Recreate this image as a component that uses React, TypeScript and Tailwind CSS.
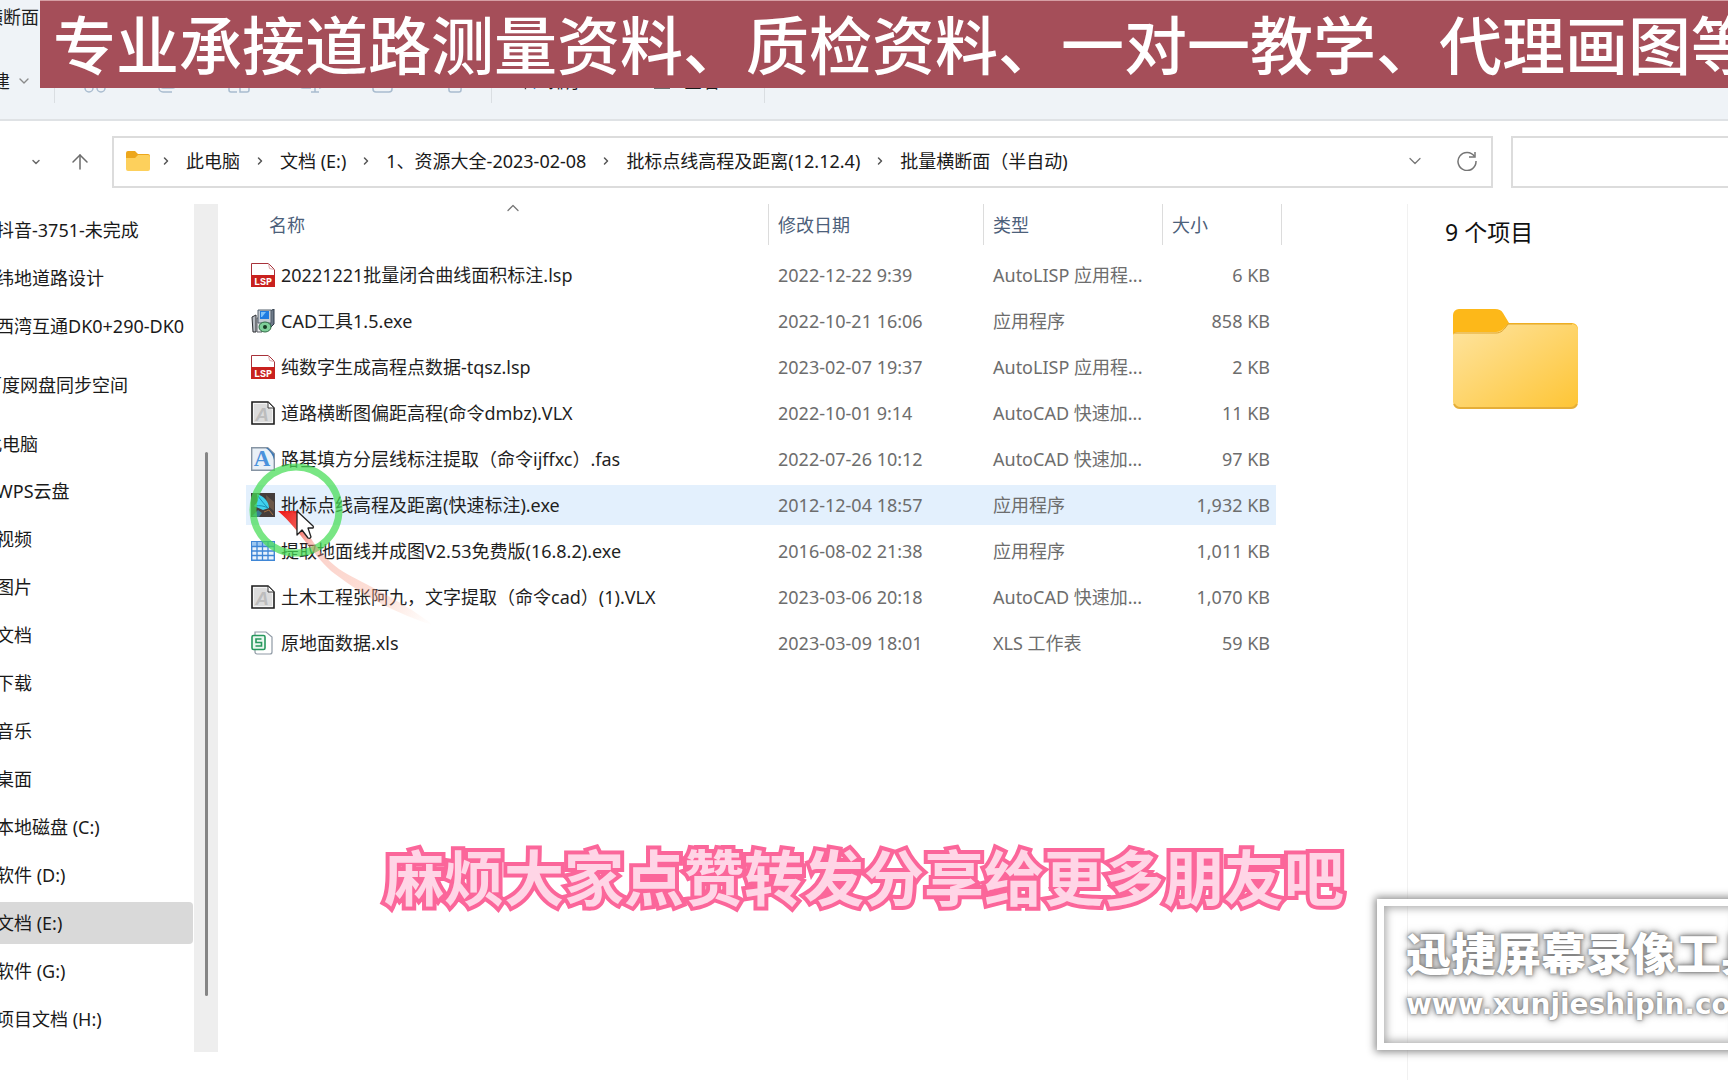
import React from 'react';
import { ArrowUp, ChevronDown, ChevronRight, ChevronUp } from 'lucide-react';

type IconKind = 'lsp' | 'setup' | 'vlx' | 'fas' | 'feather' | 'grid' | 'xls';

interface FileItem {
  name: string;
  date: string;
  type: string;
  size: string;
  icon: IconKind;
  selected?: boolean;
}

interface PlaceItem {
  label: string;
  active?: boolean;
}

const files: FileItem[] = [
  { name: '20221221批量闭合曲线面积标注.lsp', date: '2022-12-22 9:39', type: 'AutoLISP 应用程...', size: '6 KB', icon: 'lsp' },
  { name: 'CAD工具1.5.exe', date: '2022-10-21 16:06', type: '应用程序', size: '858 KB', icon: 'setup' },
  { name: '纯数字生成高程点数据-tqsz.lsp', date: '2023-02-07 19:37', type: 'AutoLISP 应用程...', size: '2 KB', icon: 'lsp' },
  { name: '道路横断图偏距高程(命令dmbz).VLX', date: '2022-10-01 9:14', type: 'AutoCAD 快速加...', size: '11 KB', icon: 'vlx' },
  { name: '路基填方分层线标注提取（命令ijffxc）.fas', date: '2022-07-26 10:12', type: 'AutoCAD 快速加...', size: '97 KB', icon: 'fas' },
  { name: '批标点线高程及距离(快速标注).exe', date: '2012-12-04 18:57', type: '应用程序', size: '1,932 KB', icon: 'feather', selected: true },
  { name: '提取地面线并成图V2.53免费版(16.8.2).exe', date: '2016-08-02 21:38', type: '应用程序', size: '1,011 KB', icon: 'grid' },
  { name: '土木工程张阿九，文字提取（命令cad）(1).VLX', date: '2023-03-06 20:18', type: 'AutoCAD 快速加...', size: '1,070 KB', icon: 'vlx' },
  { name: '原地面数据.xls', date: '2023-03-09 18:01', type: 'XLS 工作表', size: '59 KB', icon: 'xls' },
];

const quickAccess: PlaceItem[] = [
  { label: '抖音-3751-未完成' },
  { label: '纬地道路设计' },
  { label: '西湾互通DK0+290-DK0' },
];

const thisPc: PlaceItem[] = [
  { label: 'WPS云盘' },
  { label: '视频' },
  { label: '图片' },
  { label: '文档' },
  { label: '下载' },
  { label: '音乐' },
  { label: '桌面' },
  { label: '本地磁盘 (C:)' },
  { label: '软件 (D:)' },
  { label: '文档 (E:)', active: true },
  { label: '软件 (G:)' },
  { label: '项目文档 (H:)' },
];

const crumbs = ['此电脑', '文档 (E:)', '1、资源大全-2023-02-08', '批标点线高程及距离(12.12.4)', '批量横断面（半自动)'];

const FileIcon: React.FC<{ kind: IconKind }> = ({ kind }) => {
  switch (kind) {
    case 'lsp':
      return (
        <svg viewBox="0 0 24 24" className="w-6 h-6 shrink-0">
          <path d="M.5 .5h17l6 6v17H.5z" fill="#fff" stroke="#a8323a" />
          <path d="M17.5 .5l1 5 5 1" fill="none" stroke="#d9a5a8" />
          <path d="M0 12h24v12H0z" fill="#c9211e" />
          <text x="12" y="22" textAnchor="middle" fontSize="10" fontWeight="700" fontFamily="Liberation Mono, monospace" fill="#fff">LSP</text>
        </svg>
      );
    case 'setup':
      return (
        <svg viewBox="0 0 24 24" className="w-6 h-6 shrink-0">
          <path d="M1 8l4-2v17H2z" fill="#b9bec4" stroke="#2c2f33" />
          <path d="M6 9h5v14H6z" fill="#e8eaec" stroke="#5a5f66" />
          <path d="M19 2l4-2v15l-4 4z" fill="#6e7b8a" stroke="#2c3846" />
          <path d="M7 1h13v13H7z" fill="#c5ccd4" stroke="#55606d" />
          <path d="M9 2h9v8H9z" fill="#1f7be0" />
          <path d="M10 3h5l-4 5h-1z" fill="#7cc0f8" />
          <ellipse cx="14" cy="18" rx="6" ry="5" fill="#7fcf9a" stroke="#2f6b45" />
          <circle cx="14" cy="18" r="2" fill="#173a23" />
        </svg>
      );
    case 'vlx':
      return (
        <svg viewBox="0 0 24 24" className="w-6 h-6 shrink-0">
          <path d="M1 1h16l6 6v16H1z" fill="#f4f4f4" stroke="#1b1b1b" strokeWidth="1.6" />
          <path d="M3 3h12l6 6v12H3z" fill="#dcdcdc" />
          <path d="M17 1v6h6z" fill="#fff" stroke="#3a3a3a" />
          <text x="11" y="20" textAnchor="middle" fontSize="19" fontWeight="700" fontStyle="italic" fontFamily="Liberation Sans, sans-serif" fill="#bdbdbd">A</text>
        </svg>
      );
    case 'fas':
      return (
        <svg viewBox="0 0 24 24" className="w-6 h-6 shrink-0">
          <path d="M.7 .7h16l6.600 6v16.600H.7z" fill="#e9f0f7" stroke="#8694a3" strokeWidth="1.400" />
          <path d="M15 1h2l6 6v6c-1-5-4-9-8-12z" fill="#3d78b5" />
          <text x="11" y="19" textAnchor="middle" fontSize="23" fontWeight="700" fontFamily="Liberation Serif, serif" fill="#4a92dc">A</text>
        </svg>
      );
    case 'feather':
      return (
        <svg viewBox="0 0 24 24" className="w-6 h-6 shrink-0">
          <path d="M0 0h24v24H0z" fill="#453d3b" />
          <path d="M15 2l8 7v9l-7-6z" fill="#6a5748" />
          <path d="M6 1c7 2 12 8 12 14l-6 2-9-4c4-3 4-7 3-12z" fill="#3fd2ee" />
          <path d="M7 3c3 4 6 8 10 12M4 13c5-1 9 0 13 2" stroke="#1a8fb5" fill="none" />
          <path d="M1 23l6-6 4 3-3 4z" fill="#3a7d92" />
          <path d="M13 19l5-2 4 5" stroke="#a4703f" fill="none" />
        </svg>
      );
    case 'grid':
      return (
        <svg viewBox="0 0 24 24" className="w-6 h-6 shrink-0">
          <path d="M.7 2.700h22.600v18.600H.7z" fill="#e8f2fc" stroke="#3f86d6" strokeWidth="1.400" />
          <path d="M1 3h22v4H1z" fill="#9cc7f0" />
          <path d="M1 7.500h22M1 12h22M1 16.500h22M6 3v18M11.500 3v18M17 3v18" stroke="#3f86d6" strokeWidth="1.300" />
        </svg>
      );
    case 'xls':
      return (
        <svg viewBox="0 0 24 24" className="w-6 h-6 shrink-0">
          <path d="M4 1h11l6 5v15a2 2 0 0 1-2 2H6a2 2 0 0 1-2-2z" fill="#fff" stroke="#8f9aa5" strokeWidth="1.200" />
          <rect x="1" y="4.500" width="13" height="14" rx="1.500" fill="#eaf8f0" stroke="#27985e" strokeWidth="1.600" />
          <path d="M10.500 8H5v3.500h5.500V15H4.500" fill="none" stroke="#27985e" strokeWidth="1.600" />
        </svg>
      );
  }
};

const SmallFolder = () => (
  <svg viewBox="0 0 24 20" className="w-6 h-5 shrink-0">
    <path d="M0 2a2 2 0 0 1 2-2h7l3 3h10a2 2 0 0 1 2 2v6H0z" fill="#eda71c" />
    <path d="M0 7h9l3-3h10a2 2 0 0 1 2 2v12a2 2 0 0 1-2 2H2a2 2 0 0 1-2-2z" fill="#fdd05c" />
  </svg>
);

const BigFolder = () => (
  <svg viewBox="0 0 125 100" className="w-[125px] h-[100px]">
    <defs>
      <linearGradient id="folder-front" x1="0" y1="0" x2="1" y2="1">
        <stop offset="0" stopColor="#fee4a0" />
        <stop offset="1" stopColor="#fec535" />
      </linearGradient>
    </defs>
    <path d="M0 6a6 6 0 0 1 6-6h36c4 0 6 1 8 4l6 10h63a6 6 0 0 1 6 6v20H0z" fill="#fdb819" />
    <path d="M0 26q1-3 5-3h38c4 0 8-3 12-8h64a6 6 0 0 1 6 6v72a6 6 0 0 1-6 6H6a6 6 0 0 1-6-6z" fill="url(#folder-front)" />
    <path d="M1 24h42c5 0 8-3 12-9h64" fill="none" stroke="#dfa52c" strokeWidth="1" />
    <path d="M1 95q2 4 6 4h111q4 0 6-4" fill="none" stroke="#e5ae38" strokeWidth="2" />
  </svg>
);

const RefreshIcon = () => (
  <svg viewBox="0 0 20 20" className="w-5 h-5" fill="none" stroke="#757575" strokeWidth="1.500">
    <path d="M17.500 5.500A9 9 0 1 0 19 10" />
    <path d="M18 1v5h-6" />
  </svg>
);

const toolIcons: { label: string; path: string }[] = [
  { label: '剪切', path: 'M5 1l11 16M19 1L8 17M2 19a4 4 0 1 0 8 0a4 4 0 1 0-8 0M14 19a4 4 0 1 0 8 0a4 4 0 1 0-8 0' },
  { label: '复制', path: 'M8 1h10a2 2 0 0 1 2 2v14a2 2 0 0 1-2 2H8a2 2 0 0 1-2-2V3a2 2 0 0 1 2-2zM4 5v14a4 4 0 0 0 4 4h9' },
  { label: '粘贴', path: 'M10 23H4a2 2 0 0 1-2-2V4a2 2 0 0 1 2-2h14v6M13 9h7a2 2 0 0 1 2 2v10a2 2 0 0 1-2 2h-7z' },
  { label: '重命名', path: 'M12 19H4a3 3 0 0 1-3-3V8a3 3 0 0 1 3-3h8M20 5a3 3 0 0 1 3 3v8a3 3 0 0 1-3 3M16 1v22M12 23h8' },
  { label: '共享', path: 'M10 4H5a3 3 0 0 0-3 3v13a3 3 0 0 0 3 3h13a3 3 0 0 0 3-3v-4M8 15c1-6 5-8 9-8V2l6 7-6 6v-4' },
  { label: '删除', path: 'M3 5h18M9 5V2h6v3M5 5l1 16a2 2 0 0 0 2 2h8a2 2 0 0 0 2-2l1-16' },
];

const TopBar = () => (
  <header className="bg-[#eff3f7] border-b-2 border-[#dfe2e5] pb-[3px]">
    <div className="flex justify-end w-[39px] h-[34px] overflow-hidden items-center whitespace-nowrap text-[#1f1f1f]">批量横断面</div>
    <div className="flex items-center h-[70px] mt-3">
      <button className="flex items-center gap-[6px] text-[#1a1a1a]">
        <span className="flex justify-end w-[10px] overflow-hidden whitespace-nowrap">新建</span>
        <ChevronDown className="w-4 h-4 text-[#8a8a8a]" />
      </button>
      <div className="w-px h-11 ml-[22px] mr-7 bg-[#dadee2]" />
      <div className="flex items-center gap-12">
        {toolIcons.map((tool) => (
          <button key={tool.label} aria-label={tool.label}>
            <svg viewBox="0 0 24 24" className="block w-6 h-6" fill="none" stroke="#a9bccf" strokeWidth="1.500">
              <path d={tool.path} />
            </svg>
          </button>
        ))}
      </div>
      <div className="w-px h-11 ml-6 mr-7 bg-[#dadee2]" />
      <button className="flex items-center gap-2 text-[#1a1a1a]">
        <svg viewBox="0 0 22 22" className="w-5 h-5" fill="none" strokeWidth="1.500">
          <path d="M6 20V3M2 7l4-4 4 4" stroke="#444" />
          <path d="M16 2v17M12 15l4 4 4-4" stroke="#2f7fc9" />
        </svg>
        排序
      </button>
      <button className="flex items-center gap-3 ml-[68px] text-[#1a1a1a]">
        <svg viewBox="0 0 20 20" className="w-5 h-5" stroke="#444" strokeWidth="1.500">
          <path d="M2 4h16M2 10h16M2 17h16" />
        </svg>
        查看
      </button>
      <div className="w-px h-11 ml-11 bg-[#dadee2]" />
    </div>
  </header>
);

const AddressBar = () => (
  <div className="flex items-center pt-[15px] pb-4">
    <div className="flex items-center gap-[30px] w-[112px] pl-[30px] text-[#6b6b6b]">
      <button aria-label="最近浏览的位置"><ChevronDown className="block w-3 h-3" strokeWidth={3} /></button>
      <button aria-label="上移"><ArrowUp className="block w-6 h-6 -ml-1" strokeWidth={1.500} /></button>
    </div>
    <div className="flex items-center flex-1 h-[52px] pl-3 pr-[14px] pb-[2px] border-2 border-[#dcdcdc]">
      <SmallFolder />
      <nav className="flex items-center flex-1 -ml-1 whitespace-nowrap text-[#1a1a1a]">
        {crumbs.map((crumb) => (
          <React.Fragment key={crumb}>
            <ChevronRight className="w-3 h-3 mx-[14px] text-[#555]" strokeWidth={3} />
            <a href="#">{crumb}</a>
          </React.Fragment>
        ))}
      </nav>
      <button aria-label="以前的位置" className="mr-8 text-[#777]"><ChevronDown className="block w-5 h-5" strokeWidth={1.500} /></button>
      <button aria-label="刷新"><RefreshIcon /></button>
    </div>
    <input type="search" aria-label="搜索" className="w-[217px] h-[52px] ml-[18px] px-3 border-2 border-r-0 border-[#dcdcdc] focus:outline-none" />
  </div>
);

const PlaceLink: React.FC<{ item: PlaceItem }> = ({ item }) => (
  <li className="flex items-center h-12">
    <a href="#" className={`flex items-center w-full h-[42px] pl-3 rounded-r-sm ${item.active ? 'bg-[#d9d9d9]' : ''}`}>{item.label}</a>
  </li>
);

const Sidebar = () => (
  <aside className="flex w-[218px] mb-7 overflow-hidden shrink-0">
    <nav className="w-[209px] -ml-4 pt-[2px] whitespace-nowrap shrink-0 text-[#1a1a1a]">
      <ul>
        {quickAccess.map((item) => <PlaceLink key={item.label} item={item} />)}
      </ul>
      <a href="#" className="flex items-center h-12 mt-[11px]">百度网盘同步空间</a>
      <a href="#" className="flex items-center h-12 mt-[11px]">此电脑</a>
      <ul className="-mt-px">
        {thisPc.map((item) => <PlaceLink key={item.label} item={item} />)}
      </ul>
    </nav>
    <div className="flex flex-1 justify-center ml-px bg-[#eee]">
      <div className="w-[3px] mt-[248px] mb-14 rounded-full bg-[#858585]" />
    </div>
  </aside>
);

const HeadCell: React.FC<{ label: string }> = ({ label }) => (
  <th className="p-0 font-normal align-top">
    <button className="flex items-center w-full h-[41px] pl-[9px] border-l border-[#dcdcdc]">{label}</button>
  </th>
);

const FileTable = () => (
  <main className="flex-1 min-w-0 pl-7 pr-[125px]">
    <table className="w-full -mt-[6px] table-fixed border-separate border-spacing-x-0 border-spacing-y-[6px] text-left whitespace-nowrap">
      <colgroup>
        <col />
        <col className="w-[215px]" />
        <col className="w-[179px]" />
        <col className="w-[114px]" />
        <col className="w-[6px]" />
      </colgroup>
      <thead className="text-[#4c607a]">
        <tr className="h-[45px]">
          <th className="relative p-0 font-normal align-top">
            <button className="flex items-center w-full h-[41px] pl-[23px]">名称</button>
            <ChevronUp className="absolute top-[-6px] left-1/2 w-5 h-5 -ml-1 text-[#777]" strokeWidth={1.500} />
          </th>
          <HeadCell label="修改日期" />
          <HeadCell label="类型" />
          <HeadCell label="大小" />
          <th className="p-0 align-top"><div className="h-[41px] border-r border-[#dcdcdc]" /></th>
        </tr>
      </thead>
      <tbody className="text-[#6d6d6d]">
        {files.map((file) => (
          <tr key={file.name} className="h-10">
            <td className={`p-0 ${file.selected ? 'bg-[#e3f0fd]' : ''}`}>
              <div className="flex items-center gap-[6px] pl-[5px] text-[#1f1f1f]">
                <FileIcon kind={file.icon} />
                {file.name}
              </div>
            </td>
            <td className={`p-0 pl-[10px] ${file.selected ? 'bg-[#e3f0fd]' : ''}`}>{file.date}</td>
            <td className={`p-0 pl-[10px] ${file.selected ? 'bg-[#e3f0fd]' : ''}`}>{file.type}</td>
            <td className={`p-0 pr-[6px] text-right ${file.selected ? 'bg-[#e3f0fd]' : ''}`}>{file.size}</td>
          </tr>
        ))}
      </tbody>
    </table>
  </main>
);

const DetailsPane = () => (
  <section className="w-[321px] pt-3 pl-[37px] border-l border-[#f1f1f1] shrink-0">
    <h2 className="text-[23px] leading-8 text-[#111]">9 个项目</h2>
    <div className="mt-[61px] ml-2"><BigFolder /></div>
  </section>
);

// Click ring, pointer and the fading stroke behind it
const Pointer = () => (
  <svg viewBox="0 0 200 176" className="absolute left-[240px] top-[460px] w-[200px] h-[176px] pointer-events-none">
    <defs>
      <linearGradient id="trail" gradientUnits="userSpaceOnUse" x1="40" y1="51" x2="192" y2="166">
        <stop offset="0" stopColor="#f01818" />
        <stop offset="0.12" stopColor="#f23a30" stopOpacity="0.850" />
        <stop offset="0.250" stopColor="#f58a78" stopOpacity="0.400" />
        <stop offset="0.700" stopColor="#f9a890" stopOpacity="0.350" />
        <stop offset="1" stopColor="#fbc0a8" stopOpacity="0" />
      </linearGradient>
    </defs>
    <circle cx="56" cy="50" r="43" fill="none" stroke="#45dc55" strokeOpacity="0.720" strokeWidth="7" />
    <path d="M38 51h19c8 18 18 40 42 58 20 13 54 26 96 57-38-12-70-29-100-52C74 98 62 72 38 51z" fill="url(#trail)" />
    <path d="M57 51v24l5-5 6 8q2 1 3-1l-3-9h5q1-1 0-2z" fill="#fff" stroke="#222" strokeWidth="1.300" strokeLinejoin="round" />
  </svg>
);

const Watermark = () => (
  <div className="absolute top-[899px] left-[1377px] -right-4 h-[151px] pt-[22px] pl-[22px] border-[7px] border-white overflow-hidden whitespace-nowrap text-white shadow-[0_0_8px_2px_#8a8a8a,inset_0_0_8px_2px_#a8a8a8]">
    <p className="text-[45px] leading-[52px] font-black [text-shadow:0_0_2px_#777,0_0_4px_#888,0_0_9px_#777]">迅捷屏幕录像工具</p>
    <p className="mt-[9px] font-['DejaVu_Sans',sans-serif] text-[28px] leading-8 font-bold [text-shadow:0_0_2px_#777,0_0_4px_#888,0_0_8px_#888]">www.xunjieshipin.com</p>
  </div>
);

const App: React.FC = () => {
  return (
    <div className="relative flex flex-col min-h-screen overflow-hidden bg-white text-[18px] leading-6 font-['Noto_Sans','Noto_Sans_CJK_SC',sans-serif]">
      <TopBar />
      <AddressBar />
      <div className="flex flex-1">
        <Sidebar />
        <FileTable />
        <DetailsPane />
      </div>

      <Pointer />
      <div className="absolute top-0 left-10 right-0 h-[88px] flex items-center pl-[13px] overflow-hidden whitespace-nowrap border-t border-[#d59ea4] bg-[#a54e59] text-white text-[63px] font-medium">
        专业承接道路测量资料、质检资料、一对一教学、代理画图等
      </div>
      <p className="absolute inset-x-0 top-[842px] text-center text-[60px] leading-[72px] font-bold whitespace-nowrap text-[#ffd5e6] [-webkit-text-stroke:8px_#fb669a] [paint-order:stroke_fill]">
        麻烦大家点赞转发分享给更多朋友吧
      </p>
      <Watermark />
    </div>
  );
};

export default App;
